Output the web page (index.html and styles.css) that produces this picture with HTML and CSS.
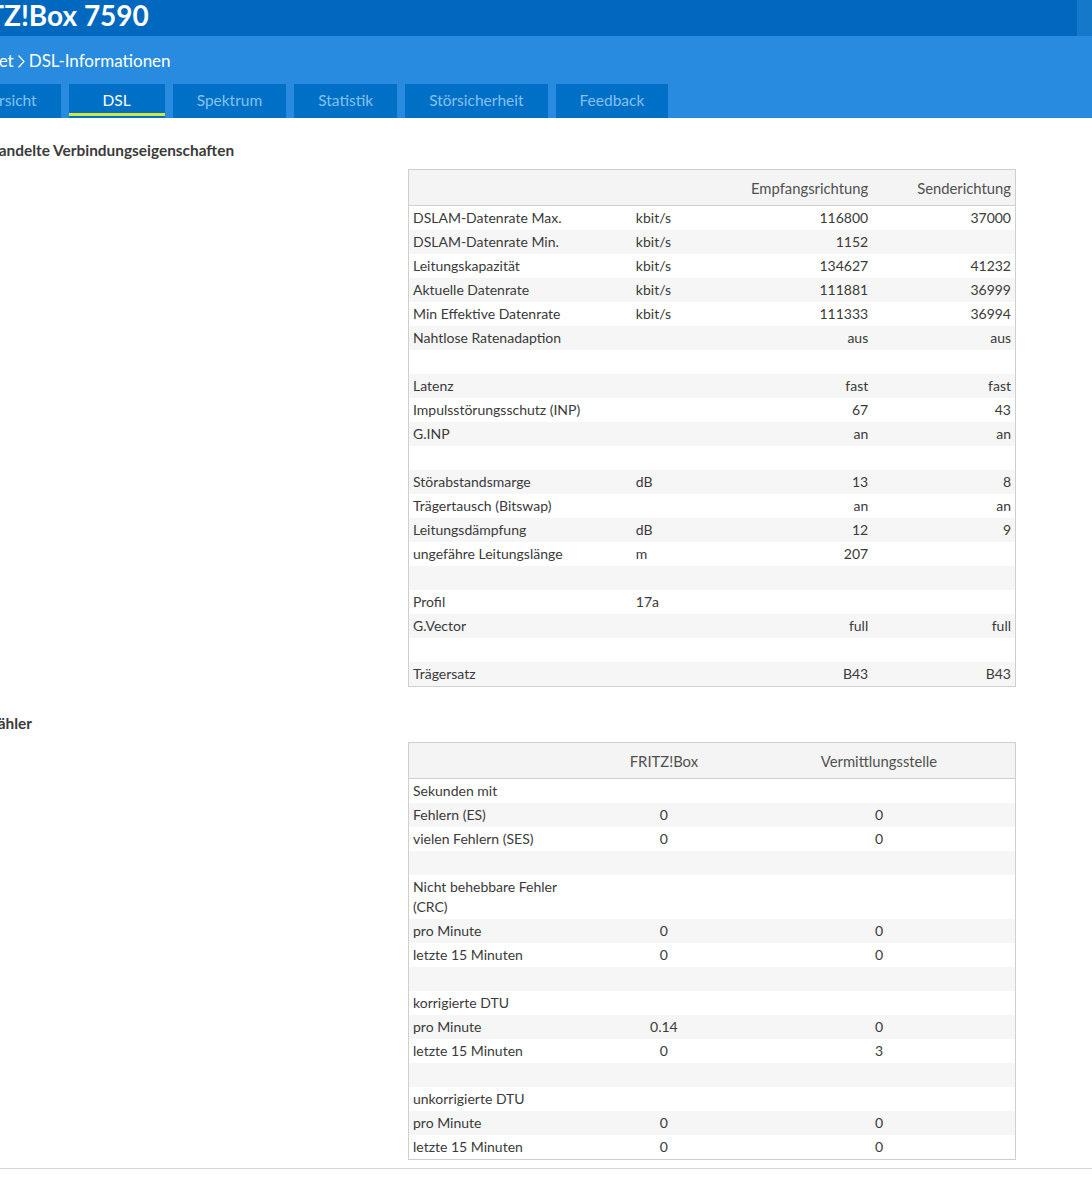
FILE: index.html
```html
<!DOCTYPE html>
<html lang="de">
<head>
<meta charset="utf-8">
<title>FRITZ!Box 7590 - DSL-Informationen</title>
<link rel="stylesheet" href="styles.css">
</head>
<body>
<div class="page">
  <header class="topbar">
    <div class="title">FRITZ!Box 7590</div>
    <div class="topbar-btn"></div>
  </header>
  <div class="subbar">
    <div class="breadcrumb">Internet<svg class="chev" width="8" height="15" viewBox="0 0 8 15"><path d="M1.5 1.5 L7 7.5 L1.5 13.5" fill="none" stroke="#fff" stroke-width="1.2"/></svg>DSL-Informationen</div>
    <nav class="tabs">
      <div class="tab tab-first">Übersicht</div>
      <div class="tab active">DSL</div>
      <div class="tab">Spektrum</div>
      <div class="tab">Statistik</div>
      <div class="tab">Störsicherheit</div>
      <div class="tab">Feedback</div>
    </nav>
  </div>

  <main class="content">
    <h2 class="section-title">Ausgehandelte Verbindungseigenschaften</h2>
    <table class="data t1">
      <colgroup><col class="c1"><col class="c2"><col class="c3"><col class="c4"></colgroup>
      <thead>
        <tr><th></th><th></th><th class="r">Empfangsrichtung</th><th class="r">Senderichtung</th></tr>
      </thead>
      <tbody>
        <tr><td>DSLAM-Datenrate Max.</td><td>kbit/s</td><td class="r">116800</td><td class="r">37000</td></tr>
        <tr><td>DSLAM-Datenrate Min.</td><td>kbit/s</td><td class="r">1152</td><td class="r"></td></tr>
        <tr><td>Leitungskapazität</td><td>kbit/s</td><td class="r">134627</td><td class="r">41232</td></tr>
        <tr><td>Aktuelle Datenrate</td><td>kbit/s</td><td class="r">111881</td><td class="r">36999</td></tr>
        <tr><td>Min Effektive Datenrate</td><td>kbit/s</td><td class="r">111333</td><td class="r">36994</td></tr>
        <tr><td>Nahtlose Ratenadaption</td><td></td><td class="r">aus</td><td class="r">aus</td></tr>
        <tr class="empty"><td></td><td></td><td></td><td></td></tr>
        <tr><td>Latenz</td><td></td><td class="r">fast</td><td class="r">fast</td></tr>
        <tr><td>Impulsstörungsschutz (INP)</td><td></td><td class="r">67</td><td class="r">43</td></tr>
        <tr><td>G.INP</td><td></td><td class="r">an</td><td class="r">an</td></tr>
        <tr class="empty"><td></td><td></td><td></td><td></td></tr>
        <tr><td>Störabstandsmarge</td><td>dB</td><td class="r">13</td><td class="r">8</td></tr>
        <tr><td>Trägertausch (Bitswap)</td><td></td><td class="r">an</td><td class="r">an</td></tr>
        <tr><td>Leitungsdämpfung</td><td>dB</td><td class="r">12</td><td class="r">9</td></tr>
        <tr><td>ungefähre Leitungslänge</td><td>m</td><td class="r">207</td><td class="r"></td></tr>
        <tr class="empty"><td></td><td></td><td></td><td></td></tr>
        <tr><td>Profil</td><td>17a</td><td class="r"></td><td class="r"></td></tr>
        <tr><td>G.Vector</td><td></td><td class="r">full</td><td class="r">full</td></tr>
        <tr class="empty"><td></td><td></td><td></td><td></td></tr>
        <tr><td>Trägersatz</td><td></td><td class="r">B43</td><td class="r">B43</td></tr>
      </tbody>
    </table>

    <h2 class="section-title second">Fehlerzähler</h2>
    <table class="data t2">
      <colgroup><col class="d1"><col class="d2"><col class="d3"></colgroup>
      <thead>
        <tr><th></th><th class="c">FRITZ!Box</th><th class="c">Vermittlungsstelle</th></tr>
      </thead>
      <tbody>
        <tr><td>Sekunden mit</td><td></td><td></td></tr>
        <tr><td>Fehlern (ES)</td><td class="c">0</td><td class="c">0</td></tr>
        <tr><td>vielen Fehlern (SES)</td><td class="c">0</td><td class="c">0</td></tr>
        <tr class="empty"><td></td><td></td><td></td></tr>
        <tr><td>Nicht behebbare Fehler (CRC)</td><td></td><td></td></tr>
        <tr><td>pro Minute</td><td class="c">0</td><td class="c">0</td></tr>
        <tr><td>letzte 15 Minuten</td><td class="c">0</td><td class="c">0</td></tr>
        <tr class="empty"><td></td><td></td><td></td></tr>
        <tr><td>korrigierte DTU</td><td></td><td></td></tr>
        <tr><td>pro Minute</td><td class="c">0.14</td><td class="c">0</td></tr>
        <tr><td>letzte 15 Minuten</td><td class="c">0</td><td class="c">3</td></tr>
        <tr class="empty"><td></td><td></td><td></td></tr>
        <tr><td>unkorrigierte DTU</td><td></td><td></td></tr>
        <tr><td>pro Minute</td><td class="c">0</td><td class="c">0</td></tr>
        <tr><td>letzte 15 Minuten</td><td class="c">0</td><td class="c">0</td></tr>
      </tbody>
    </table>
    <hr class="rule">
  </main>
</div>
</body>
</html>
```

FILE: styles.css
```css
html, body {
  margin: 0;
  padding: 0;
  background: #fff;
  overflow-x: hidden;
}
body {
  font-family: Lato, "Open Sans", sans-serif;
  color: #3a3a3a;
  font-size: 14px;
}
.page {
  margin-left: -56px;
  width: 1148px;
}
.topbar {
  height: 36px;
  background: #0069bf;
  display: flex;
  align-items: center;
  justify-content: space-between;
}
.title {
  color: #fff;
  font-weight: 700;
  font-size: 28px;
  line-height: 36px;
  padding-left: 1px;
  margin-top: -6px;
}
.topbar-btn {
  width: 15px;
  height: 36px;
  background: #1579c9;
}
.subbar {
  background: #288be0;
  padding-top: 13px;
}
.breadcrumb {
  color: #fff;
  font-size: 17px;
  line-height: 24px;
  height: 24px;
  padding-left: 10px;
  display: flex;
  align-items: center;
}
.chev {
  margin: 0 4px 0 3px;
}
.tabs {
  display: flex;
  gap: 8px;
  margin-top: 11px;
  padding-left: 3px;
}
.tab {
  height: 34px;
  line-height: 33px;
  padding: 0 24px;
  min-width: 48px;
  text-align: center;
  background: #006fc6;
  color: #86c2f3;
  font-size: 15.5px;
}
.tab.active {
  color: #fff;
  box-shadow: inset 0 -2px 0 #006fc6, inset 0 -5px 0 #d3e83c;
}
.content {
  padding-left: 4px;
  padding-top: 22px;
}
.section-title {
  margin: 0;
  font-size: 15.4px;
  line-height: 20px;
  font-weight: 700;
  color: #3a3a3a;
}
.section-title.second {
  margin-top: 26px;
}
.data {
  margin: 9px 0 0 460px;
  border-collapse: collapse;
  table-layout: fixed;
  width: 608px;
  border: 1px solid #cfcfcf;
}
.data th {
  height: 35px;
  padding: 0 4px;
  background: #f4f4f4;
  font-weight: 400;
  border-bottom: 1px solid #cfcfcf;
  color: #505050;
  font-size: 14.8px;
}
.data td {
  padding: 2px 4px;
  line-height: 20px;
  height: 20px;
  vertical-align: top;
  white-space: normal;
}
.data tbody tr:nth-child(even) td {
  background: #f6f6f6;
}
.data .r { text-align: right; }
.data .c { text-align: center; }
.c1 { width: 223px; }
.c2 { width: 100px; }
.c3 { width: 140px; }
.c4 { width: 143px; }
.d1 { width: 176px; }
.d2 { width: 158px; }
.d3 { width: 272px; }
.rule {
  margin: 8px 0 0 0;
  border: 0;
  border-top: 1px solid #d6d6d6;
  height: 0;
}
```
